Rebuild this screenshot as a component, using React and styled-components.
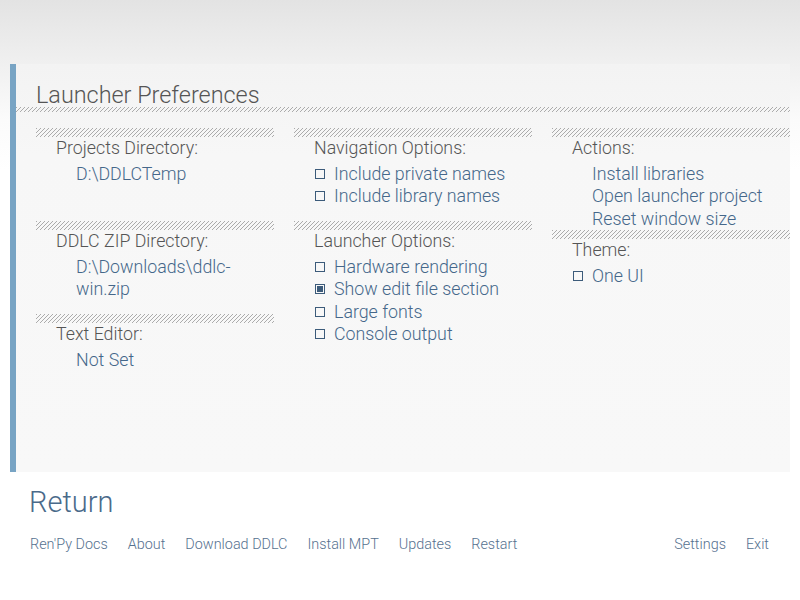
import React from "react";
import styled, { createGlobalStyle } from "styled-components";

const Global = createGlobalStyle`
  html, body { margin: 0; padding: 0; }
  body {
    font-family: Roboto, "Noto Sans", "Liberation Sans", sans-serif;
    background: linear-gradient(to bottom, #e3e3e3 0px, #f0f0f0 64px, #fbfbfb 120px, #ffffff 170px);
    background-repeat: no-repeat;
    background-color: #fff;
  }
`;

const Page = styled.div`
  width: 800px;
  height: 600px;
  display: flex;
  flex-direction: column;
  padding-top: 64px;
  box-sizing: border-box;
`;

const Panel = styled.section`
  flex: none;
  height: 408px;
  margin: 0 10px;
  border-left: 6px solid #78a4c4;
  background: linear-gradient(to bottom, #f3f3f3 0px, #f7f7f7 90px, #f8f8f8 100%);
  box-sizing: border-box;
  padding-top: 19px;
  display: flex;
  flex-direction: column;
`;

const Title = styled.h1`
  margin: 0;
  padding-left: 20px;
  font-size: 23.4px;
  line-height: 24px;
  font-weight: 300;
  color: #555555;
`;

const Hatch = styled.div`
  height: ${(p) => p.$h}px;
  background-image: repeating-linear-gradient(
    135deg,
    #ababab 0px,
    #ababab 0.9px,
    transparent 0.9px,
    transparent 2.83px
  );
`;

const Columns = styled.div`
  display: grid;
  grid-template-columns: repeat(3, 238px);
  column-gap: 20px;
  padding-left: 20px;
  margin-top: 16px;
  align-items: start;
`;

const Column = styled.div`
  display: flex;
  flex-direction: column;
`;

const Section = styled.div`
  min-height: 93px;
  display: flex;
  flex-direction: column;
`;

const Label = styled.div`
  padding-left: 20px;
  font-size: 17.8px;
  line-height: 22px;
  font-weight: 300;
  color: #555555;
`;

const Items = styled.div`
  margin-top: 4px;
  display: flex;
  flex-direction: column;
`;

const Value = styled.div`
  padding-left: 40px;
  font-size: 17.8px;
  line-height: 22.3px;
  font-weight: 300;
  color: #45678a;
`;

const CheckItem = styled.div`
  padding-left: 21px;
  display: flex;
  align-items: center;
  gap: 9px;
  font-size: 17.8px;
  line-height: 22.3px;
  font-weight: 300;
  color: #45678a;
`;

const Box = styled.span`
  flex: none;
  width: 10px;
  height: 10px;
  box-sizing: border-box;
  border: 1px solid #3c5b7a;
  padding: 1px;
  display: flex;
  &::after {
    content: "";
    flex: 1;
    background: ${(p) => (p.$checked ? "#3c5b7a" : "transparent")};
  }
`;

const Footer = styled.footer`
  display: flex;
  flex-direction: column;
  padding: 0 31px 0 29px;
`;

const ReturnLink = styled.div`
  margin-top: 13px;
  font-size: 29px;
  line-height: 34px;
  font-weight: 300;
  color: #4a6a8a;
`;

const LinkBar = styled.nav`
  margin-top: 16px;
  display: flex;
  justify-content: space-between;
  padding-left: 1px;
`;

const LinkGroup = styled.div`
  display: flex;
  gap: 20px;
`;

const Link = styled.span`
  font-size: 14.4px;
  line-height: 20px;
  font-weight: 300;
  color: #56718f;
`;

function Check({ checked, children }) {
  return (
    <CheckItem>
      <Box $checked={checked} />
      <span>{children}</span>
    </CheckItem>
  );
}

export default function App() {
  return (
    <>
      <Global />
      <Page>
        <Panel>
          <Title>Launcher Preferences</Title>
          <Hatch $h={5} />
          <Columns>
            <Column>
              <Section>
                <Hatch $h={9} />
                <Label>Projects Directory:</Label>
                <Items>
                  <Value>D:\DDLCTemp</Value>
                </Items>
              </Section>
              <Section>
                <Hatch $h={9} />
                <Label>DDLC ZIP Directory:</Label>
                <Items>
                  <Value>D:\Downloads\ddlc-win.zip</Value>
                </Items>
              </Section>
              <Section>
                <Hatch $h={9} />
                <Label>Text Editor:</Label>
                <Items>
                  <Value>Not Set</Value>
                </Items>
              </Section>
            </Column>
            <Column>
              <Section>
                <Hatch $h={9} />
                <Label>Navigation Options:</Label>
                <Items>
                  <Check>Include private names</Check>
                  <Check>Include library names</Check>
                </Items>
              </Section>
              <Section>
                <Hatch $h={9} />
                <Label>Launcher Options:</Label>
                <Items>
                  <Check>Hardware rendering</Check>
                  <Check checked>Show edit file section</Check>
                  <Check>Large fonts</Check>
                  <Check>Console output</Check>
                </Items>
              </Section>
            </Column>
            <Column>
              <Section>
                <Hatch $h={9} />
                <Label>Actions:</Label>
                <Items>
                  <Value>Install libraries</Value>
                  <Value>Open launcher project</Value>
                  <Value>Reset window size</Value>
                </Items>
              </Section>
              <Section>
                <Hatch $h={9} />
                <Label>Theme:</Label>
                <Items>
                  <Check>One UI</Check>
                </Items>
              </Section>
            </Column>
          </Columns>
        </Panel>
        <Footer>
          <ReturnLink>Return</ReturnLink>
          <LinkBar>
            <LinkGroup>
              <Link>Ren'Py Docs</Link>
              <Link>About</Link>
              <Link>Download DDLC</Link>
              <Link>Install MPT</Link>
              <Link>Updates</Link>
              <Link>Restart</Link>
            </LinkGroup>
            <LinkGroup>
              <Link>Settings</Link>
              <Link>Exit</Link>
            </LinkGroup>
          </LinkBar>
        </Footer>
      </Page>
    </>
  );
}
